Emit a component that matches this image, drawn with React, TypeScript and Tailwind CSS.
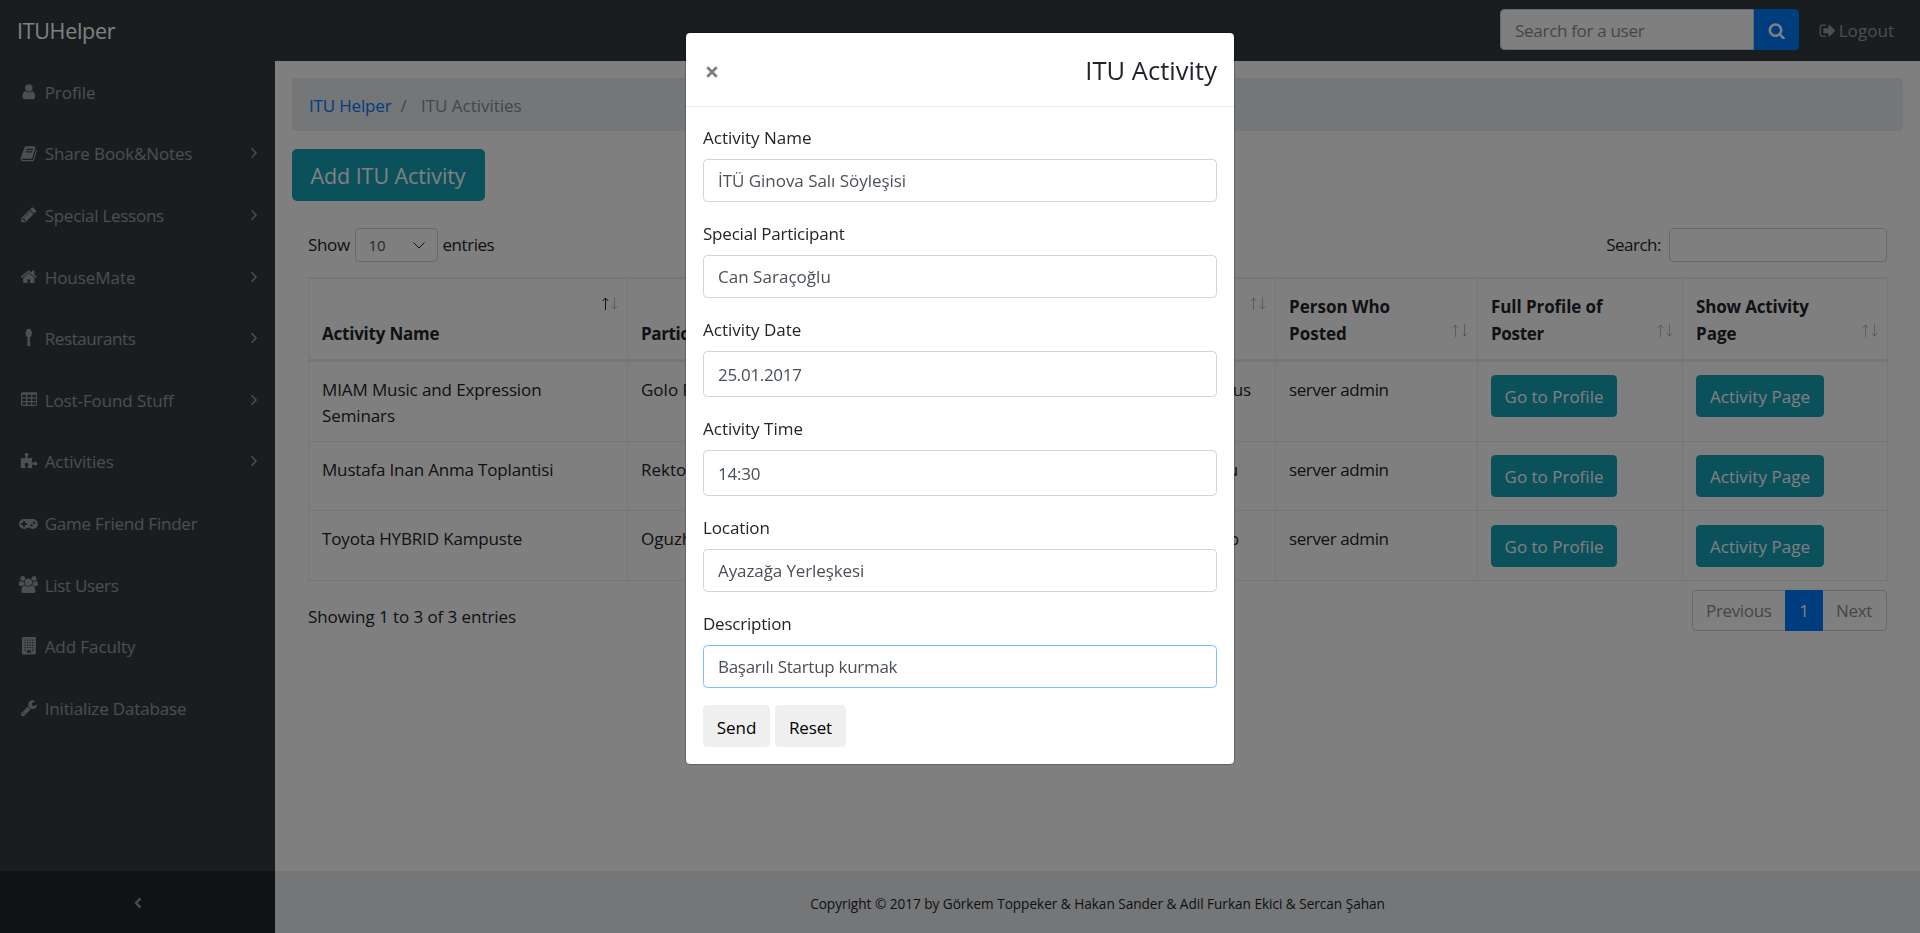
import React from "react";
import clsx from "clsx";

function Glyph({ d, w = 1792, className }: { d: string; w?: number; className?: string }) {
  return (
    <svg viewBox={`0 0 ${w} 1792`} className={clsx("h-[17.6px] w-auto fill-current", className)} fillRule="evenodd">
      <path d={d} />
    </svg>
  );
}

const hole = (x: number, y: number, w: number, h: number) => `M${x} ${y}h${w}v${h}h${-w}z`;

const tablePath =
  "M160 128h1344q66 0 113 47t47 113v1088q0 66-47 113t-113 47h-1344q-66 0-113-47t-47-113v-1088q0-66 47-113t113-47z" +
  [384, 768, 1152].map((y) => [128, 640, 1152].map((x) => hole(x, y, 384, 256)).join("")).join("");

const buildingPath =
  "M64 0h1280q26 0 45 19t19 45v1664q0 26-19 45t-45 19h-1280q-26 0-45-19t-19-45v-1664q0-26 19-45t45-19z" +
  [256, 512, 768, 1024].map((y) => [256, 512, 768, 1024].map((x) => hole(x, y, 128, 128)).join("")).join("") +
  hole(256, 1280, 128, 128) +
  hole(1024, 1280, 128, 128) +
  hole(512, 1344, 384, 256);

const icons = {
  user: "M1536 1399q0 109-62.5 187t-150.5 78h-854q-88 0-150.5-78t-62.5-187q0-85 8.5-160.5t31.5-152 58.5-131 94-89 134.5-34.5q131 128 313 128t313-128q76 0 134.5 34.5t94 89 58.5 131 31.5 152 8.5 160.5zm-256-887q0 159-112.5 271.5t-271.5 112.5-271.5-112.5-112.5-271.5 112.5-271.5 271.5-112.5 271.5 112.5 112.5 271.5z",
  book: "M1703 478q40 57 18 129l-275 906q-19 64-76.5 107.5t-122.5 43.5h-923q-77 0-148.5-53.5t-99.5-131.5q-24-67-2-127 0-4 3-27t4-37q1-8-3-21.5t-3-19.5q2-11 8-21t16.5-23.5 16.5-23.5q23-38 45-91.5t30-91.5q3-10 .5-30t-.5-28q3-11 17-28t17-23q21-36 42-92t25-90q1-9-2.5-32t.5-28q4-13 22-30.5t22-22.5q19-26 42.5-84.5t27.5-96.5q1-8-3-25.5t-2-26.5q2-8 9-18t18-23 17-21q8-12 16.5-30.5t15-35 16-36 19.5-32 26.5-23.5 36-11.5 47.5 5.5l-1 3q38-9 51-9h761q74 0 114 56t18 130l-274 906q-36 119-71.5 153.5t-128.5 34.5h-869q-27 0-38 15-11 16-1 43 24 70 144 70h923q29 0 56-15.5t35-41.5l300-987q7-22 5-57 38 15 59 43zm-1064 2q-4 13 2 22.5t20 9.5h608q13 0 25.5-9.5t16.5-22.5l21-64q4-13-2-22.5t-20-9.5h-608q-13 0-25.5 9.5t-16.5 22.5zm-83 256q-4 13 2 22.5t20 9.5h608q13 0 25.5-9.5t16.5-22.5l21-64q4-13-2-22.5t-20-9.5h-608q-13 0-25.5 9.5t-16.5 22.5z",
  pencil: "M491 1536l91-91-235-235-91 91v107h128v128h107zm523-928q0-22-22-22-10 0-17 7l-542 542q-7 7-7 17 0 22 22 22 10 0 17-7l542-542q7-7 7-17zm-54-192l416 416-832 832h-416v-416zm683 96q0 53-37 90l-166 166-416-416 166-165q36-38 90-38 53 0 91 38l235 234q37 39 37 91z",
  home: "M1472 992v480q0 26-19 45t-45 19h-384v-384h-256v384h-384q-26 0-45-19t-19-45v-480q0-1 .5-3t.5-3l575-474 575 474q1 2 1 6zm223-69l-62 74q-8 9-21 11h-3q-13 0-21-7l-692-577-692 577q-12 8-24 7-13-2-21-11l-62-74q-8-10-7-23.5t11-21.5l719-599q32-26 76-26t76 26l244 204v-195q0-14 9-23t23-9h192q14 0 23 9t9 23v408l219 182q10 8 11 21.5t-7 23.5z",
  spoon: "M704 464q0 145-57 243.5t-152 135.5l45 821q2 26-16 45t-44 19h-192q-26 0-44-19t-16-45l45-821q-95-37-152-135.5t-57-243.5q0-128 42.5-249.5t117.5-200 160-78.5 160 78.5 117.5 200 42.5 249.5z",
  puzzle: "M1755 1083q0 81-44.5 135t-123.5 54q-41 0-77.5-17.5t-59-38-56.5-38-71-17.5q-110 0-110 124 0 39 16 115t15 115v5q-22 0-33 1-34 3-97.5 11.5t-115.5 13.5-98 5q-61 0-103-26.5t-42-83.5q0-37 17.5-71t38-56.5 38-59 17.5-77.5q0-79-54-123.5t-135-44.5q-84 0-143 45.5t-59 127.5q0 43 15 83t33.5 64.5 33.5 53 15 50.5q0 45-46 89-37 35-117 35-95 0-245-24-9-2-27.5-4t-27.5-4l-13-2q-1 0-3-1-2 0-2-1v-1024q2 1 17.5 3.5t34 5 21.5 3.5q150 24 245 24 80 0 117-35 46-44 46-89 0-22-15-50.5t-33.5-53-33.5-64.5-15-83q0-82 59-127.5t144-45.5q80 0 134 44.5t54 123.5q0 41-17.5 77.5t-38 59-38 56.5-17.5 71q0 57 42 83.5t103 26.5q64 0 180-15t163-17v2q-1 2-3.5 17.5t-5 34-3.5 21.5q-24 150-24 245 0 80 35 117 44 46 89 46 22 0 50.5-15t53-33.5 64.5-33.5 83-15q82 0 127.5 59t45.5 143z",
  gamepad: "M832 1088v-128q0-14-9-23t-23-9h-192v-192q0-14-9-23t-23-9h-128q-14 0-23 9t-9 23v192h-192q-14 0-23 9t-9 23v128q0 14 9 23t23 9h192v192q0 14 9 23t23 9h128q14 0 23-9t9-23v-192h192q14 0 23-9t9-23zm576 64q0-53-37.5-90.5t-90.5-37.5-90.5 37.5-37.5 90.5 37.5 90.5 90.5 37.5 90.5-37.5 37.5-90.5zm256-256q0-53-37.5-90.5t-90.5-37.5-90.5 37.5-37.5 90.5 37.5 90.5 90.5 37.5 90.5-37.5 37.5-90.5zm256 128q0 212-150 362t-362 150q-192 0-338-128h-220q-146 128-338 128-212 0-362-150t-150-362 150-362 362-150h896q212 0 362 150t150 362z",
  group: "M593 896q-162 5-265 128h-134q-82 0-138-40.5t-56-118.5q0-353 124-353 6 0 43.5 21t97.5 42.5 119 21.5q67 0 133-23-5 37-5 66 0 139 81 256zm1071 637q0 120-73 189.5t-194 69.5h-874q-121 0-194-69.5t-73-189.5q0-53 3.5-103.5t14-109 26.5-108.5 43-97.5 62-81 85.5-53.5 111.5-20q10 0 43 21.5t73 48 107 48 135 21.5 135-21.5 107-48 73-48 43-21.5q61 0 111.5 20t85.5 53.5 62 81 43 97.5 26.5 108.5 14 109 3.5 103.5zm-1024-1277q0 106-75 181t-181 75-181-75-75-181 75-181 181-75 181 75 75 181zm704 384q0 159-112.5 271.5t-271.5 112.5-271.5-112.5-112.5-271.5 112.5-271.5 271.5-112.5 271.5 112.5 112.5 271.5zm576 225q0 78-56 118.5t-138 40.5h-134q-103-123-265-128 81-117 81-256 0-29-5-66 66 23 133 23 59 0 119-21.5t97.5-42.5 43.5-21q124 0 124 353zm-128-609q0 106-75 181t-181 75-181-75-75-181 75-181 181-75 181 75 75 181z",
  wrench: "M448 1472q0-26-19-45t-45-19-45 19-19 45 19 45 45 19 45-19 19-45zm644-420l-682 682q-37 37-90 37-52 0-91-37l-106-108q-38-36-38-90 0-53 38-91l681-681q39 98 114.5 173.5t173.5 114.5zm634-435q0 39-23 106-47 134-164.5 217.5t-258.5 83.5q-185 0-316.5-131.5t-131.5-316.5 131.5-316.5 316.5-131.5q58 0 121.5 16.5t107.5 46.5q16 11 16 28t-16 28l-293 169v224l193 107q5-3 79-48.5t135.5-81 70.5-35.5q15 0 23.5 10t8.5 25z",
  search: "M1216 832q0-185-131.5-316.5t-316.5-131.5-316.5 131.5-131.5 316.5 131.5 316.5 316.5 131.5 316.5-131.5 131.5-316.5zm512 832q0 52-38 90t-90 38q-54 0-90-38l-343-342q-179 124-399 124-143 0-273.5-55.5t-225-150-150-225-55.5-273.5 55.5-273.5 150-225 225-150 273.5-55.5 273.5 55.5 225 150 150 225 55.5 273.5q0 220-124 399l343 343q37 37 37 90z",
  signOut: "M704 1440q0 4 1 20t.5 26.5-3 23.5-10 19.5-20.5 6.5h-320q-119 0-203.5-84.5t-84.5-203.5v-704q0-119 84.5-203.5t203.5-84.5h320q13 0 22.5 9.5t9.5 22.5q0 4 1 20t.5 26.5-3 23.5-10 19.5-20.5 6.5h-320q-66 0-113 47t-47 113v704q0 66 47 113t113 47h312l11.5 1 11.5 3 8 5.5 7 9 2 13.5zm928-544q0 26-19 45l-544 544q-19 19-45 19t-45-19-19-45v-288h-448q-26 0-45-19t-19-45v-384q0-26 19-45t45-19h448v-288q0-26 19-45t45-19 45 19l544 544q19 19 19 45z",
};

type NavItem = { label: string; icon: string; w?: number; track: string; more?: boolean };

const nav: NavItem[] = [
  { label: "Profile", icon: icons.user, track: "tracking-[-0.07px]" },
  { label: "Share Book&Notes", icon: icons.book, track: "tracking-[-0.12px]", more: true },
  { label: "Special Lessons", icon: icons.pencil, track: "tracking-[-0.27px]", more: true },
  { label: "HouseMate", icon: icons.home, track: "tracking-[-0.04px]", more: true },
  { label: "Restaurants", icon: icons.spoon, w: 768, track: "tracking-[-0.4px]", more: true },
  { label: "Lost-Found Stuff", icon: tablePath, w: 1664, track: "tracking-[-0.1px]", more: true },
  { label: "Activities", icon: icons.puzzle, track: "tracking-[-0.1px]", more: true },
  { label: "Game Friend Finder", icon: icons.gamepad, w: 1920, track: "tracking-[-0.22px]" },
  { label: "List Users", icon: icons.group, w: 1920, track: "tracking-[-0.3px]" },
  { label: "Add Faculty", icon: buildingPath, w: 1408, track: "tracking-[-0.08px]" },
  { label: "Initialize Database", icon: icons.wrench, track: "tracking-[-0.15px]" },
];

function Chevron({ left, className }: { left?: boolean; className?: string }) {
  return (
    <svg viewBox="0 0 8 12" className={clsx("h-3 w-2 fill-none stroke-current", className)}>
      <path d={left ? "M6.5 1.3 2 6l4.5 4.7" : "M1.5 1.3 6 6 1.5 10.7"} />
    </svg>
  );
}

function SortArrows({ active, className }: { active?: boolean; className: string }) {
  return (
    <svg viewBox="0 0 16 13" className={clsx("absolute right-[9px] h-[13px] w-4 fill-none stroke-[#212529]", className)}>
      <path d="M3.5 13V1M.8 4 3.5 1l2.7 3" className={active ? "opacity-100" : "opacity-30"} />
      <path d="M12.5 0v12M9.8 9l2.7 3 2.7-3" className="opacity-30" />
    </svg>
  );
}

const rows = [
  { h: "h-[80px]", btnPt: "pt-[13px]", name: "MIAM Music and Expression Seminars", nameTrack: "tracking-[-0.11px]", who: "Golo Föllmer", place: "Kampus", placePr: "pr-[24px]" },
  { h: "h-[69px]", btnPt: "pt-[13px]", name: "Mustafa Inan Anma Toplantisi", nameTrack: "tracking-[-0.17px]", who: "Rektorluk", place: "Salonu", placePr: "pr-[37px]" },
  { h: "h-[70px]", btnPt: "pt-[14px]", name: "Toyota HYBRID Kampuste", nameTrack: "tracking-[-0.15px]", who: "Oguzhan", place: "Workshop", placePr: "pr-[36px]" },
];

const cols = "grid grid-cols-[319px_223px_200px_225px_202px_205px_205px]";
const cell = "relative border-r border-[#e9ecef] pl-[13px]";
const infoBtn = "flex h-[42px] items-center justify-center rounded-[4.4px] bg-[#17a2b8] text-white";

const fields = [
  { label: "Activity Name", lt: "", value: "İTÜ Ginova Salı Söyleşisi", vt: "tracking-[-0.04px]", h: "h-[43px] pb-px" },
  { label: "Special Participant", lt: "tracking-[-0.21px]", value: "Can Saraçoğlu", vt: "tracking-[0.03px]", h: "h-[43px] pb-px" },
  { label: "Activity Date", lt: "", value: "25.01.2017", vt: "tracking-[-0.31px]", h: "h-[46px] pt-px" },
  { label: "Activity Time", lt: "", value: "14:30", vt: "tracking-[-0.23px]", h: "h-[46px] pt-px" },
  { label: "Location", lt: "tracking-[-0.12px]", value: "Ayazağa Yerleşkesi", vt: "tracking-[-0.1px]", h: "h-[43px] pb-px" },
  { label: "Description", lt: "tracking-[-0.22px]", value: "Başarılı Startup kurmak", vt: "tracking-[-0.28px]", h: "h-[43px] pb-px", focused: true },
];

function Modal() {
  return (
    <div className="fixed inset-0 flex items-start justify-center bg-black/50">
      <div className="mt-8 w-[550px] rounded-[5px] border border-black/20 bg-white bg-clip-padding">
        <div className="flex h-[74px] items-center justify-between border-b border-[#e9ecef] pr-[17px] pl-[20px]">
          <svg viewBox="0 0 12 12" className="mt-[4px] size-3 fill-none stroke-[#7f7f7f] stroke-[2.8]">
            <path d="M1.3 1.3 10.7 10.7M10.7 1.3 1.3 10.7" />
          </svg>
          <h4 className="mt-px text-[25.5px] leading-[38px] tracking-[0.04px]">ITU Activity</h4>
        </div>
        <form className="px-[17px] pt-[17px] pb-[17px]">
          {fields.map((f) => (
            <div key={f.label} className="mb-[18px] last-of-type:mb-[17px]">
              <label className={clsx("mb-2 block h-[27px] leading-[27px]", f.lt)}>{f.label}</label>
              <input
                readOnly
                value={f.value}
                className={clsx("block w-full rounded-[4.4px] border bg-white px-[14px] text-[#495057] outline-none", f.h, f.vt, f.focused ? "border-[#80bdff]" : "border-[#ced4da]")}
              />
            </div>
          ))}
          <section className="flex gap-[5px]">
            <button type="button" className="h-[42px] w-[67px] rounded-[4.4px] bg-[#efefef] pt-[3px] text-black">Send</button>
            <button type="button" className="h-[42px] w-[71px] rounded-[4.4px] bg-[#efefef] pt-[3px] tracking-[-0.15px] text-black">Reset</button>
          </section>
        </form>
      </div>
    </div>
  );
}

export default function App() {
  return (
    <div className="flex h-[933px] w-full flex-col overflow-hidden bg-white font-['Open_Sans',sans-serif] text-[17px] leading-[26px] text-[#212529]">
      <header className="flex h-[61px] shrink-0 items-center justify-between bg-[#343a40] pr-[26px] pl-[17px]">
        <a className="pt-px text-[21.5px] tracking-[-0.3px] text-white">ITUHelper</a>
        <div className="flex items-center">
          <div className="mb-[2px] flex h-[41px]">
            <input readOnly placeholder="Search for a user" className="w-[254px] rounded-l-[4.4px] border border-[#ced4da] bg-white px-[14px] pt-[2px] tracking-[-0.31px] outline-none placeholder:text-[#868e96]" />
            <button className="flex w-[45px] items-center justify-center rounded-r-[4.4px] bg-[#007bff] text-white">
              <Glyph d={icons.search} w={1792} className="mt-0.5 ml-px" />
            </button>
          </div>
          <a className="ml-[20px] flex items-center text-white/50">
            <Glyph d={icons.signOut} className="mt-px" />
            <span className="ml-[2px] tracking-[0.04px]">Logout</span>
          </a>
        </div>
      </header>

      <div className="flex min-h-0 flex-1">
        <aside className="flex w-[275px] shrink-0 flex-col bg-[#343a40]">
          <ul className="flex-1 text-white/50">
            {nav.map((n) => (
              <li key={n.label} className="flex h-[61.6px] items-center pr-[17px] pl-[17.6px]">
                <span className="flex w-[22.6px] justify-center">
                  <Glyph d={n.icon} w={n.w} />
                </span>
                <span className={clsx("ml-[4.5px] flex-1 pt-[2px] whitespace-nowrap", n.track)}>{n.label}</span>
                {n.more && <Chevron className="stroke-[1.5]" />}
              </li>
            ))}
          </ul>
          <div className="flex h-[62px] items-center justify-center bg-[#212529] pt-[2px] text-white/50">
            <Chevron left className="stroke-[2.4]" />
          </div>
        </aside>

        <main className="flex min-w-0 flex-1 flex-col">
          <div className="flex-1 pt-[17px] pr-[17px] pl-[17px]">
            <ol className="flex h-[53px] items-center rounded-[4.4px] bg-[#e9ecef] px-[17px] pt-[2px]">
              <li className="w-[91.5px] tracking-[-0.17px] text-[#007bff]">ITU Helper</li>
              <li className="w-[20.5px] text-[#868e96]">/</li>
              <li className="tracking-[-0.03px] text-[#868e96]">ITU Activities</li>
            </ol>
            <button className="mt-[18px] block h-[52px] w-[193px] rounded-[5px] bg-[#17a2b8] pt-px pr-px text-[21.5px] tracking-[-0.07px] text-white">Add ITU Activity</button>

            <div className="px-4">
              <div className="mt-[27px] flex h-[34px] items-center justify-between">
                <label className="flex items-center">
                  <span className="w-[47px] tracking-[-0.32px]">Show</span>
                  <span className="flex h-[34px] w-[83px] items-center justify-between rounded-[4px] border border-[#ced4da] pr-[12px] pl-[12.5px] text-[15px] text-[#495057]">
                    10
                    <svg viewBox="0 0 12 7" className="h-[7px] w-3 fill-none stroke-[#212529] stroke-1">
                      <path d="M.5.5 6 6 11.5.5" />
                    </svg>
                  </span>
                  <span className="ml-[4.5px] tracking-[-0.45px]">entries</span>
                </label>
                <label className="flex items-center">
                  <span className="tracking-[-0.5px]">Search:</span>
                  <span className="ml-[8px] h-[34px] w-[218px] rounded-[4px] border border-[#ced4da]" />
                </label>
              </div>

              <div className="mt-[15px] w-[1580px] border-t-2 border-l border-[#e9ecef]">
                <div className={clsx(cols, "h-[83px] border-b-[3px] border-[#e9ecef] font-bold")}>
                  <div className={clsx(cell, "flex items-end pb-[12px] tracking-[-0.22px]")}>
                    Activity Name
                    <SortArrows active className="top-[18px]" />
                  </div>
                  <div className={clsx(cell, "flex items-end pb-[12px] tracking-[-0.4px]")}>Participants</div>
                  <div className={clsx(cell, "flex items-end pb-[12px]")}>Date</div>
                  <div className={clsx(cell, "flex items-end pb-[12px]")}>
                    Place
                    <SortArrows className="top-[18px]" />
                  </div>
                  <div className={clsx(cell, "pt-[14px] leading-[27px]")}>
                    <p>Person Who</p>
                    <p>Posted</p>
                    <SortArrows className="top-[45px]" />
                  </div>
                  <div className={clsx(cell, "pt-[14px] leading-[27px]")}>
                    <p className="tracking-[-0.08px]">Full Profile of</p>
                    <p className="tracking-[-0.33px]">Poster</p>
                    <SortArrows className="top-[45px]" />
                  </div>
                  <div className={clsx(cell, "pt-[14px] leading-[27px]")}>
                    <p className="tracking-[-0.18px]">Show Activity</p>
                    <p>Page</p>
                    <SortArrows className="top-[45px]" />
                  </div>
                </div>
                {rows.map((r) => (
                  <div key={r.name} className={clsx(cols, "border-b border-[#e9ecef]", r.h)}>
                    <div className={clsx(cell, "pt-[15px] pr-10", r.nameTrack)}>{r.name}</div>
                    <div className={clsx(cell, "pt-[15px]")}>{r.who}</div>
                    <div className={cell} />
                    <div className={clsx(cell, "pt-[15px] text-right tracking-[-0.2px]", r.placePr)}>{r.place}</div>
                    <div className={clsx(cell, "pt-[15px] tracking-[-0.39px]")}>server admin</div>
                    <div className={clsx(cell, r.btnPt)}>
                      <a className={clsx(infoBtn, "w-[126px] pt-px")}>Go to Profile</a>
                    </div>
                    <div className={clsx(cell, r.btnPt)}>
                      <a className={clsx(infoBtn, "w-[128px] pt-px tracking-[0.06px]")}>Activity Page</a>
                    </div>
                  </div>
                ))}
              </div>

              <div className="flex items-start justify-between">
                <p className="pt-[23px] tracking-[-0.07px]">Showing 1 to 3 of 3 entries</p>
                <div className="mt-[9px] flex h-[41px] text-[#868e96]">
                  <span className="flex w-[93px] items-center rounded-l-[4.4px] border border-r-0 border-[#ced4da] pt-px pl-[13px] tracking-[-0.34px]">Previous</span>
                  <span className="flex w-[38px] items-center justify-center bg-[#007bff] pt-px text-white">1</span>
                  <span className="flex w-[64px] items-center rounded-r-[4.4px] border border-l-0 border-[#ced4da] pt-px pl-[13px] tracking-[-0.35px]">Next</span>
                </div>
              </div>
            </div>
          </div>
          <footer className="flex h-[62px] items-center justify-center bg-[#e9ecef] pt-[3px] text-[13.6px] tracking-[-0.02px]">
            Copyright © 2017 by Görkem Toppeker &amp; Hakan Sander &amp; Adil Furkan Ekici &amp; Sercan Şahan
          </footer>
        </main>
      </div>
      <Modal />
    </div>
  );
}
